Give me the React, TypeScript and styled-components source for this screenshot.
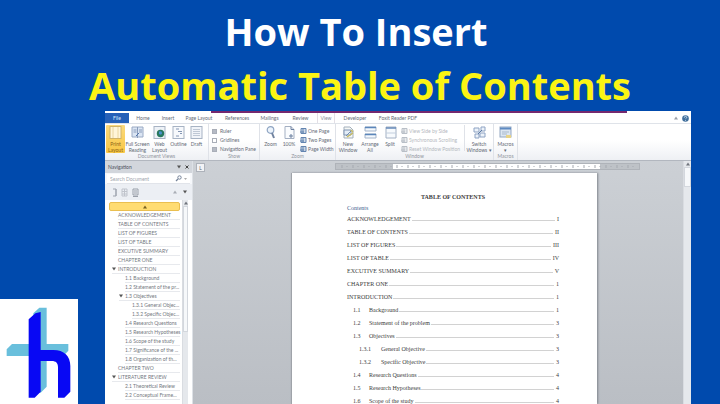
import React from "react";
import styled, { createGlobalStyle, css } from "styled-components";

const GlobalStyle = createGlobalStyle`
  * { box-sizing: border-box; }
  body { margin: 0; background: #004aad; font-family: Lato, "Liberation Sans", sans-serif; }
  button, input { font: inherit; color: inherit; margin: 0; padding: 0; border: 0; background: none; }
  button { cursor: pointer; }
  a { color: inherit; text-decoration: none; }
`;

const Poster = styled.main`
  display: flex;
  flex-direction: column;
  height: 100vh;
  overflow: hidden;
  background: #004aad;
`;

const Headline = styled.h1`
  margin: 0;
  padding-top: 4px;
  height: 111px;
  flex: none;
  text-align: center;
  font: 700 38px/54px "Open Sans", "Noto Sans", sans-serif;
  white-space: nowrap;
`;

const HeadlineRow = styled.span<{ $tone: string; $trail?: number }>`
  display: block;
  color: ${(p) => p.$tone};
  padding-right: ${(p) => p.$trail ?? 0}px;
`;

const Stage = styled.div`
  display: flex;
  flex: 1;
  min-height: 0;
  gap: 27px;
  padding-right: 29px;
`;

const LogoCard = styled.div`
  flex: none;
  align-self: flex-end;
  width: 78px;
  height: 105px;
  background: #fff;
  svg { display: block; width: 100%; height: 100%; }
`;

const AppWindow = styled.section`
  flex: 1;
  min-width: 0;
  display: flex;
  flex-direction: column;
  background: #fff;
  color: #646a75;
  font-size: 5px;
  line-height: 6px;
`;

const TitleStrip = styled.div`
  flex: none;
  height: 2px;
  margin: 0 64px 0 106px;
  background: #74286f;
`;

const TabBar = styled.nav`
  flex: none;
  display: flex;
  height: 11px;
  border-bottom: 1px solid #dfe3e9;
`;

const Tab = styled.button<{ $w: number; $kind?: "file" | "active" }>`
  width: ${(p) => p.$w}px;
  white-space: nowrap;
  ${(p) => p.$kind === "file" && css`background: #2560b8; color: #dce9fb;`}
  ${(p) => p.$kind === "active" && css`
    background: #fff;
    border: solid #e3dfe6;
    border-width: 0 1px;
    color: #8a8f99;
  `}
`;

const TabTools = styled.div`
  display: flex;
  align-items: center;
  gap: 4px;
  margin-left: auto;
  padding-right: 2px;
  svg { display: block; }
`;

const Ribbon = styled.div`
  flex: none;
  display: flex;
  height: 37px;
  background: linear-gradient(#fff 45%, #eef0f4);
  border-bottom: 1px solid #b2b7bf;
`;

const Group = styled.section<{ $w: number }>`
  width: ${(p) => p.$w}px;
  display: flex;
  flex-direction: column;
  border-right: 1px solid #dfe2e8;
`;

const GroupBody = styled.div`
  display: flex;
  flex: 1;
  padding: 1px 1px 0;
`;

const Divider = styled.span`
  width: 1px;
  height: 26px;
  margin: 0 1px 0 auto;
  background: #dfe2e8;
`;

const GroupName = styled.span`
  height: 7px;
  text-align: center;
  color: #9196a0;
`;

const Tool = styled.button<{ $w: number; $on?: boolean }>`
  width: ${(p) => p.$w}px;
  height: 28px;
  display: flex;
  flex-direction: column;
  align-items: center;
  gap: 2px;
  padding-top: 1px;
  svg { display: block; width: 13px; height: 13px; flex: none; }
  ${(p) => p.$on && css`background: linear-gradient(#fbd97c, #f8c744); border-radius: 1px; color: #8b6417;`}
`;

const ToolText = styled.span`
  text-align: center;
  line-height: 6px;
  white-space: pre;
`;

const OptionList = styled.div<{ $muted?: boolean }>`
  display: flex;
  flex-direction: column;
  gap: 3px;
  padding: 3px 0 0 2px;
  color: ${(p) => (p.$muted ? "#b4b8be" : "#666b76")};
`;

const Option = styled.label`
  display: flex;
  align-items: center;
  gap: 3px;
  height: 6px;
  white-space: nowrap;
`;

const OptionButton = styled.button`
  display: flex;
  align-items: center;
  gap: 1px;
  height: 6px;
  white-space: nowrap;
  svg { display: block; width: 7px; height: 6px; }
`;

const Tick = styled.input`
  appearance: none;
  width: 5px;
  height: 5px;
  border: 1px solid #a9aeb8 !important;
  &:checked { background: #b5bac4; }
`;

const Body = styled.div`
  flex: 1;
  min-height: 0;
  display: flex;
`;

const NavPane = styled.aside`
  flex: none;
  width: 88px;
  display: flex;
  flex-direction: column;
  background: #f6f8fb;
  border-right: 1px solid #dde1e6;
`;

const PaneHead = styled.div`
  flex: none;
  display: flex;
  align-items: center;
  gap: 4px;
  height: 12px;
  padding: 0 3px;
  background: #d2d6dc;
  color: #4c515b;
  strong { font-weight: 400; flex: 1; }
`;

const Search = styled.label`
  flex: none;
  display: flex;
  align-items: center;
  height: 10px;
  margin: 1px 2px 0;
  padding: 0 3px;
  background: #fff;
  border-bottom: 1px solid #e1e4ea;
  input { flex: 1; min-width: 0; outline: 0; height: 7px; }
  input::placeholder { color: #a0a5ae; opacity: 1; }
  svg { display: block; width: 12px; height: 7px; }
`;

const PaneTools = styled.div`
  flex: none;
  display: flex;
  align-items: center;
  gap: 6px;
  height: 16px;
  padding: 0 5px 0 7px;
  background: #eceff4;
  svg { display: block; }
  svg:first-child { margin-right: auto; }
`;

const PaneRow = styled.div`
  flex: 1;
  min-height: 0;
  display: flex;
  padding-right: 4px;
  background: #fff;
`;

const Outline = styled.ul`
  list-style: none;
  flex: 1;
  min-width: 0;
  margin: 0;
  padding: 2px 2px 0 4px;
  overflow: hidden;
`;

const OutlineItem = styled.li<{ $indent: number }>`
  height: 9px;
  padding-left: ${(p) => p.$indent}px;
`;

const OutlineLink = styled.a`
  display: flex;
  align-items: center;
  gap: 2px;
  height: 9px;
  border-bottom: 1px solid #e7e9ed;
  white-space: nowrap;
  color: #737780;
  svg { width: 4px; height: 4px; flex: none; }
`;

const TopMark = styled.button`
  display: flex;
  align-items: center;
  justify-content: center;
  width: 100%;
  height: 9px;
  border: 1px solid #eabf50;
  border-radius: 2px;
  background: #ffdc72;
`;

const Scroll = styled.div<{ $w: number; $thumb: number }>`
  flex: none;
  width: ${(p) => p.$w}px;
  display: flex;
  flex-direction: column;
  align-items: center;
  background: #e5e8ec;
  border-left: 1px solid #d9dce1;
  svg { display: block; flex: none; margin: 1px 0; }
  i { width: 100%; height: ${(p) => p.$thumb}px; background: #f6f8fa; border: 1px solid #d3d7dd; }
`;

const Desk = styled.div`
  flex: 1;
  min-width: 0;
  display: flex;
  flex-direction: column;
  background: linear-gradient(#ccd0d5, #babec4);
`;

const RulerRow = styled.div`
  flex: none;
  display: flex;
  height: 12px;
  padding: 2px 43px 2px 3px;
`;

const TabStop = styled.button`
  width: 9px;
  height: 9px;
  margin-right: 130px;
  flex: none;
  border: 1px solid #adb2ba;
  background: #f2f3f5;
  color: #666;
`;

const Ruler = styled.div`
  flex: 1;
  display: flex;
  height: 7px;
  border: 1px solid #afb3b9;
  svg { display: block; width: 100%; height: 5px; }
`;

const Paper = styled.article`
  flex: 1;
  min-height: 0;
  margin: 0 86px 0 98px;
  padding: 20px 38px 0 55px;
  overflow: hidden;
  background: #fff;
  border-left: 1px solid #9fa3a9;
  box-shadow: 1px 0 2px #7f848b;
  color: #3c3c3c;
  font: 6px/8px "Liberation Serif", serif;
`;

const PaperTitle = styled.h2`
  margin: 0 0 3px;
  font-size: 6px;
  line-height: 8px;
  text-align: center;
`;

const ContentsLabel = styled.p`
  margin: 0;
  color: #3f5f8f;
`;

const Entries = styled.ol`
  list-style: none;
  margin: 0;
  padding: 0;
`;

const Entry = styled.a<{ $level: number }>`
  display: flex;
  align-items: center;
  height: 13px;
  padding-left: ${(p) => p.$level * 6}px;
  white-space: nowrap;
`;

const EntryNo = styled.span<{ $level: number }>`
  width: ${(p) => (p.$level === 2 ? 22 : 16)}px;
`;

const Leader = styled.span`
  flex: 1;
  height: 5px;
  margin: 0 2px 0 1px;
  border-bottom: 1px solid #d2d2d2;
`;

const Arrow = ({ up, c = "#555" }: { up?: boolean; c?: string }) => (
  <svg width="4" height="4" viewBox="0 0 4 4" aria-hidden="true">
    <path d={up ? "M0 3.5 2 .5 4 3.5z" : "M0 .5 4 .5 2 3.5z"} fill={c} />
  </svg>
);

const icons: Record<string, React.ReactNode> = {
  print: <><rect x="1" y=".5" width="11" height="12" fill="#fff5d9" stroke="#d0b36a" /><path d="M4 1v11M9 1v11" stroke="#ead6a0" /></>,
  book: <><path d="M1 1h11v10H1z" fill="#dbe5f3" stroke="#9aaac4" /><path d="M6.500 1v11" stroke="#8b9dbb" /><path d="M2.500 4h3M2.500 6h3M8 4h3M8 6h3" stroke="#8b9dbb" /><path d="M5 10l3-3" stroke="#5073aa" /></>,
  web: <><rect x="1" y=".5" width="11" height="12" fill="#eef2f7" stroke="#a7b3c4" /><circle cx="7.500" cy="7.500" r="3.700" fill="#28785f" /><path d="M6 5.500q3-1 3 1.500t-3 1z" fill="#4a92cf" /></>,
  outline: <><rect x="1" y=".5" width="11" height="12" fill="#f7f9fc" stroke="#a7b3c4" /><path d="M4 3h3M6 5.500h4M4 10h3M8 7.500h2" stroke="#8496b3" /></>,
  draft: <><rect x="1" y=".5" width="11" height="12" fill="#f1f4f9" stroke="#a7b3c4" /><path d="M3 3.500h7M3 5.500h7M3 7.500h7M3 9.500h7" stroke="#b3bccb" strokeWidth=".8" /></>,
  zoom: <><circle cx="6.500" cy="4" r="3.300" fill="#edf4fb" stroke="#8fa5c3" strokeWidth="1.200" /><path d="M8 7l2 5" stroke="#71839f" strokeWidth="2" /></>,
  hundred: <><path d="M2 .5h6l3 3v9H2z" fill="#fafcfe" stroke="#a3afc2" /><path d="M8 .5v3h3M6 10h4M8 8v4" fill="none" stroke="#6b7f9e" /></>,
  newwin: <><path d="M2 1h6l3 3v8H2z" fill="#f6f8f5" stroke="#a3afbd" /><path d="M2 4h7v5H2z" fill="#e4edf7" stroke="#7f94b3" /><path d="M9 4l2 2M5 11l6-4" stroke="#c9bc62" strokeWidth="1.500" /><path d="M4 10l5-5" stroke="#718dae" /></>,
  arrange: <><path d="M1 1h11v4H1zM1 8h11v4H1z" fill="#f5f9fd" stroke="#a3b4ca" /><path d="M1 1.500h11M1 8.500h11" stroke="#5b86bb" strokeWidth="1.500" /></>,
  split: <><path d="M2 1h10v11H2z" fill="#f7fafd" stroke="#a3b1c4" /><path d="M2 2h10" stroke="#6488b8" strokeWidth="1.500" /><path d="M2 7h10" stroke="#c2cedd" /></>,
  switch: <><path d="M1 2h5v4H1zM8 1h4v4H8zM2 8h4v4H2zM7 7h5v4H7z" fill="#edf3fa" stroke="#8ea3c3" /><path d="M5 8l4-4" stroke="#5979a5" /></>,
  macros: <><rect x="1" y="1" width="11" height="10" fill="#dce6f2" stroke="#94a7c2" /><path d="M1 2.500h11" stroke="#5f8bc2" strokeWidth="2" /><path d="M3 6h7M3 8h5" stroke="#a9b9cc" /><path d="M7 9h5v3H7z" fill="#e8d387" /></>,
};

const Glyph = ({ name }: { name: string }) => (
  <svg viewBox="0 0 13 13" fill="none" aria-hidden="true">{icons[name]}</svg>
);

const MiniPages = ({ c }: { c: string }) => (
  <svg viewBox="0 0 7 6" fill="none" aria-hidden="true">
    <path d="M1 .5h5v5H1z" fill={c} fillOpacity=".3" stroke={c} />
    <path d="M3 1v4M0 4h4" stroke={c} />
  </svg>
);

const tabs: [string, number, ("file" | "active")?][] = [
  ["File", 24, "file"], ["Home", 28], ["Insert", 22], ["Page Layout", 40], ["References", 36],
  ["Mailings", 29], ["Review", 33], ["View", 18, "active"], ["Developer", 40], ["Foxit Reader PDF", 46],
];

const views: [string, string, number][] = [
  ["print", "Print\nLayout", 19], ["book", "Full Screen\nReading", 25], ["web", "Web\nLayout", 19],
  ["outline", "Outline", 19], ["draft", "Draft", 17],
];

const outline: [string, number, boolean?][] = [
  ["ACKNOWLEDGEMENT", 1], ["TABLE OF CONTENTS", 1], ["LIST OF FIGURES", 1], ["LIST OF TABLE", 1],
  ["EXCUTIVE SUMMARY", 1], ["CHAPTER ONE", 1], ["INTRODUCTION", 1, true], ["1.1 Background", 2],
  ["1.2 Statement of the pr...", 2], ["1.3 Objectives", 2, true], ["1.3.1 General Objec...", 3],
  ["1.3.2 Specific Objec...", 3], ["1.4 Research Questions", 2], ["1.5 Research Hypotheses", 2],
  ["1.6 Scope of the study", 2], ["1.7 Significance of the ...", 2], ["1.8 Organization of th...", 2],
  ["CHAPTER TWO", 1], ["LITERATURE REVIEW", 1, true], ["2.1 Theoretical Review", 2],
  ["2.2 Conceptual Frame...", 2],
];

const entries: [string, string, string, number][] = [
  ["", "ACKNOWLEDGEMENT", "I", 0], ["", "TABLE OF CONTENTS", "II", 0], ["", "LIST OF FIGURES", "III", 0],
  ["", "LIST OF TABLE", "IV", 0], ["", "EXCUTIVE SUMMARY", "V", 0], ["", "CHAPTER ONE", "1", 0],
  ["", "INTRODUCTION", "1", 0], ["1.1", "Background", "1", 1], ["1.2", "Statement of the problem", "3", 1],
  ["1.3", "Objectives", "3", 1], ["1.3.1", "General Objective", "3", 2], ["1.3.2", "Specific Objective", "3", 2],
  ["1.4", "Research Questions", "4", 1], ["1.5", "Research Hypotheses", "4", 1], ["1.6", "Scope of the study", "4", 1],
];

const ticks = Array.from({ length: 27 }, (_, i) => 6 + i * 11);

export default function App() {
  return (
    <>
      <GlobalStyle />
      <Poster>
        <Headline>
          <HeadlineRow $tone="#ffffff" $trail={8}>How To Insert</HeadlineRow>
          <HeadlineRow $tone="#fbf414">Automatic Table of Contents</HeadlineRow>
        </Headline>
        <Stage>
          <LogoCard>
            <svg viewBox="0 27 234 315" role="img" aria-label="h logo">
              <path d="M100 70 118 53H140V290L122 308H100zM20 178 36 162H205V182L190 198H20z" fill="#69bfdc" />
              <path d="M86 88 106 70 122 66V180H160C192 180 211 198 211 228V305L193 323H174V232C174 219 168 213 155 213H122V305L104 323H86z" fill="#0808f4" />
            </svg>
          </LogoCard>
          <AppWindow>
            <TitleStrip />
            <TabBar>
              {tabs.map(([name, w, kind]) => <Tab key={name} $w={w} $kind={kind}>{name}</Tab>)}
              <TabTools>
                <Arrow up c="#999fa8" />
                <svg width="7" height="7" viewBox="0 0 7 7" aria-hidden="true">
                  <circle cx="3.500" cy="3.500" r="3.300" fill="#416f9c" />
                  <path d="M2.300 2.700q0-1.300 1.200-1.300t1.200 1.100q0 .7-1.200 1.300M3.500 5v.8" fill="none" stroke="#dcebf8" strokeWidth=".8" />
                </svg>
              </TabTools>
            </TabBar>
            <Ribbon>
              <Group $w={104}>
                <GroupBody>
                  {views.map(([icon, text, w]) => (
                    <Tool key={icon} $w={w} $on={icon === "print"}><Glyph name={icon} /><ToolText>{text}</ToolText></Tool>
                  ))}
                </GroupBody>
                <GroupName>Document Views</GroupName>
              </Group>
              <Group $w={51}>
                <GroupBody>
                  <OptionList>
                    <Option><Tick type="checkbox" defaultChecked />Ruler</Option>
                    <Option><Tick type="checkbox" />Gridlines</Option>
                    <Option><Tick type="checkbox" defaultChecked />Navigation Pane</Option>
                  </OptionList>
                </GroupBody>
                <GroupName>Show</GroupName>
              </Group>
              <Group $w={76}>
                <GroupBody>
                  <Tool $w={19}><Glyph name="zoom" /><ToolText>Zoom</ToolText></Tool>
                  <Tool $w={18}><Glyph name="hundred" /><ToolText>100%</ToolText></Tool>
                  <OptionList>
                    {["One Page", "Two Pages", "Page Width"].map((t) => <OptionButton key={t}><MiniPages c="#6384b0" />{t}</OptionButton>)}
                  </OptionList>
                </GroupBody>
                <GroupName>Zoom</GroupName>
              </Group>
              <Group $w={158}>
                <GroupBody>
                  <Tool $w={22}><Glyph name="newwin" /><ToolText>{"New\nWindow"}</ToolText></Tool>
                  <Tool $w={22}><Glyph name="arrange" /><ToolText>{"Arrange\nAll"}</ToolText></Tool>
                  <Tool $w={18}><Glyph name="split" /><ToolText>Split</ToolText></Tool>
                  <OptionList $muted>
                    {["View Side by Side", "Synchronous Scrolling", "Reset Window Position"].map((t) => <OptionButton key={t}><MiniPages c="#b9bfc7" />{t}</OptionButton>)}
                  </OptionList>
                  <Divider />
                  <Tool $w={26}><Glyph name="switch" /><ToolText>{"Switch\nWindows ▾"}</ToolText></Tool>
                </GroupBody>
                <GroupName>Window</GroupName>
              </Group>
              <Group $w={24}>
                <GroupBody><Tool $w={22}><Glyph name="macros" /><ToolText>{"Macros\n▾"}</ToolText></Tool></GroupBody>
                <GroupName>Macros</GroupName>
              </Group>
            </Ribbon>
            <Body>
              <NavPane>
                <PaneHead><strong>Navigation</strong><Arrow /><svg width="4" height="4" viewBox="0 0 4 4" aria-hidden="true"><path d="M.5.5l3 3M3.500.5l-3 3" stroke="#444" /></svg></PaneHead>
                <Search>
                  <input aria-label="Search Document" placeholder="Search Document" />
                  <svg viewBox="0 0 12 7" fill="none" aria-hidden="true"><circle cx="4.500" cy="2.500" r="1.700" stroke="#75839a" /><path d="M3 4 1 6" stroke="#75839a" strokeWidth="1.300" /><path d="M9 3h3l-1.500 2z" fill="#aaa" /></svg>
                </Search>
                <PaneTools>
                  <svg width="30" height="9" viewBox="0 0 30 9" fill="none" aria-hidden="true">
                    <path d="M1 1h3v7H1M4 1v7" stroke="#9da3ae" /><path d="M10 1h5v7h-5zM10 3.500h5M10 6h5M12.500 1v7" stroke="#c0c4cc" />
                    <path d="M21 1h5v6h-5zM22 3h3M22 5h3M21 8.500h5" stroke="#999fa9" />
                  </svg>
                  <Arrow up c="#a9adb5" />
                  <Arrow />
                </PaneTools>
                <PaneRow>
                  <Outline>
                    <li><TopMark aria-label="Jump to top"><Arrow up c="#77601f" /></TopMark></li>
                    {outline.map(([text, level, open]) => (
                      <OutlineItem key={text} $indent={level * 7 + (open ? -4 : 2)}>
                        <OutlineLink href="#">{open && <Arrow c="#555" />}{text}</OutlineLink>
                      </OutlineItem>
                    ))}
                  </Outline>
                  <Scroll $w={6} $thumb={126}><Arrow up c="#70747c" /><i /></Scroll>
                </PaneRow>
              </NavPane>
              <Desk>
                <RulerRow>
                  <TabStop aria-label="Tab stop">L</TabStop>
                  <Ruler>
                    <svg viewBox="0 0 303 5" preserveAspectRatio="none" aria-hidden="true">
                      <path d="M0 0H303V5H0z" fill="#bec2c7" /><path d="M57 0H264V5H57z" fill="#fff" />
                      {ticks.map((x) => <path key={x} d={`M${x} 1v3M${x + 5} 2v1`} stroke="#a5a9b0" />)}
                    </svg>
                  </Ruler>
                </RulerRow>
                <Paper>
                  <PaperTitle>TABLE OF CONTENTS</PaperTitle>
                  <ContentsLabel>Contents</ContentsLabel>
                  <Entries>
                    {entries.map(([no, text, page, level]) => (
                      <li key={text}>
                        <Entry href="#" $level={level}>
                          {no && <EntryNo $level={level}>{no}</EntryNo>}
                          {text}<Leader />{page}
                        </Entry>
                      </li>
                    ))}
                  </Entries>
                </Paper>
              </Desk>
              <Scroll $w={8} $thumb={20}><Arrow up c="#70747c" /><i /></Scroll>
            </Body>
          </AppWindow>
        </Stage>
      </Poster>
    </>
  );
}
